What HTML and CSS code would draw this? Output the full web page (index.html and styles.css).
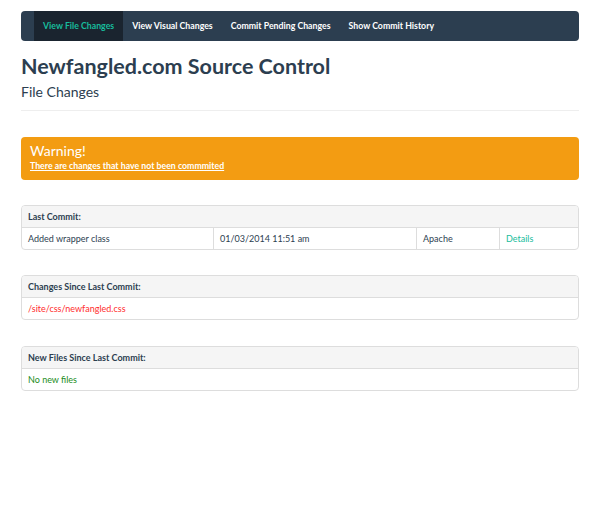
FILE: index.html
```html
<!DOCTYPE html>
<html lang="en">
<head>
    <meta charset="UTF-8">
    <title>Newfangled.com Source Control</title>
    <link rel="stylesheet" href="styles.css">
</head>
<body>
    <div class="container">
        <!-- Top Navigation -->
        <nav class="navbar">
            <a href="#" class="active">View File Changes</a>
            <a href="#">View Visual Changes</a>
            <a href="#">Commit Pending Changes</a>
            <a href="#">Show Commit History</a>
        </nav>

        <!-- Page Header -->
        <div class="page-header">
            <h1>Newfangled.com Source Control</h1>
            <h2>File Changes</h2>
        </div>

        <!-- Warning -->
        <div class="alert">
            <h3>Warning!</h3>
            <a href="#">There are changes that have not been commmited</a>
        </div>

        <!-- Last Commit -->
        <div class="panel">
            <div class="panel-heading">Last Commit:</div>
            <div class="commit-row">
                <div class="cell">Added wrapper class</div>
                <div class="cell">01/03/2014 11:51 am</div>
                <div class="cell">Apache</div>
                <div class="cell"><a href="#" class="details">Details</a></div>
            </div>
        </div>

        <!-- Changes -->
        <div class="panel">
            <div class="panel-heading">Changes Since Last Commit:</div>
            <div class="panel-body changed">/site/css/newfangled.css</div>
        </div>

        <!-- New Files -->
        <div class="panel">
            <div class="panel-heading">New Files Since Last Commit:</div>
            <div class="panel-body added">No new files</div>
        </div>
    </div>
</body>
</html>
```

FILE: styles.css
```css
/* General Reset */
* {
    margin: 0;
    padding: 0;
    box-sizing: border-box;
}

body {
    background: #fff;
    color: #2c3e50;
    font-family: 'Lato', 'Open Sans', sans-serif;
    font-size: 9px;
}

.container {
    width: 558px;
    margin-left: 21px;
}

/* Navbar */
.navbar {
    display: flex;
    height: 30px;
    margin-top: 11px;
    padding-left: 13px;
    background: #2c3e50;
    border-radius: 4px;
}

.navbar a {
    padding: 0 9px;
    line-height: 30px;
    color: #fff;
    font-size: 8.75px;
    font-weight: bold;
    text-decoration: none;
}

.navbar a.active {
    background: #1a242f;
    color: #18bc9c;
}

/* Header */
.page-header {
    padding-bottom: 10px;
    border-bottom: 1px solid #eee;
}

h1 {
    margin-top: 14px;
    font-size: 21.5px;
    line-height: 1.1;
    font-weight: bold;
}

h2 {
    margin-top: 5px;
    font-size: 14px;
    line-height: 1.2;
    font-weight: normal;
}

/* Alert */
.alert {
    margin-top: 26px;
    padding: 6px 9px 9px;
    background: #f39c12;
    border-radius: 4px;
    color: #fff;
}

.alert h3 {
    font-size: 14px;
    line-height: 1.2;
    font-weight: normal;
}

.alert a {
    display: block;
    color: #fff;
    font-size: 8.75px;
    line-height: 11px;
    font-weight: bold;
    text-decoration: underline;
}

/* Panels */
.panel {
    margin-top: 25px;
    border: 1px solid #ddd;
    border-radius: 4px;
    overflow: hidden;
}

.panel:last-child {
    margin-top: 26px;
}

.panel-heading {
    height: 22px;
    line-height: 21px;
    padding: 0 6px;
    background: #f5f5f5;
    border-bottom: 1px solid #ddd;
    font-weight: bold;
}

.panel-body {
    height: 21px;
    line-height: 21px;
    padding: 0 6px;
}

.commit-row {
    display: grid;
    grid-template-columns: 191px 203px 83px 1fr;
    height: 21px;
}

.cell {
    padding: 0 6px;
    line-height: 21px;
}

.cell + .cell {
    border-left: 1px solid #ddd;
}

.details {
    color: #18bc9c;
    text-decoration: none;
}

.changed {
    color: #ff2d2d;
}

.added {
    color: #218c21;
}
```
